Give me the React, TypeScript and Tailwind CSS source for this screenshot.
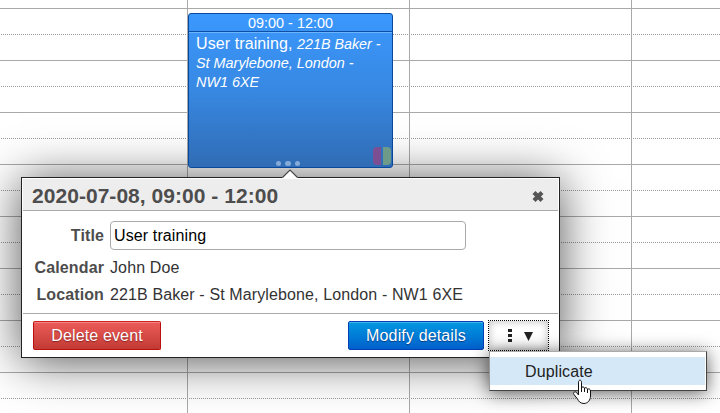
const SLOTS = Array.from({ length: 8 }, (_, i) => i);

function Grid() {
  return (
    <div className="flex h-[413px] w-[720px] bg-white">
      <Column className="w-[188px] border-r" />
      <Column className="w-[222px] border-r" />
      <Column className="w-[222px] border-r" />
      <Column className="w-[88px]" />
    </div>
  );
}

function Column({ className }: { className: string }) {
  return (
    <div className={`h-[413px] shrink-0 overflow-hidden border-[#a9a9a9] ${className}`}>
      <div className="h-[9px] border-b border-[#a9a9a9]" />
      {SLOTS.map((slot) => (
        <div key={slot} className="flex h-[52px] flex-col border-b border-[#a9a9a9]">
          <div className="h-[26px] shrink-0 border-b border-transparent bg-[repeating-linear-gradient(to_right,transparent_0_1px,#999_1px_2px)] bg-[length:100%_1px] bg-[position:0_25px] bg-no-repeat bg-origin-border" />
        </div>
      ))}
    </div>
  );
}

function EventCard() {
  return (
    <div className="absolute left-[188px] top-[13px] flex h-[155px] w-[205px] flex-col rounded-[3px] border border-[#07489b] bg-linear-to-b from-[#3b98fd] via-[#3788e2] to-[#306cb5] text-white">
      <div className="h-[18px] shrink-0 border-b border-[#0c4fa5] text-center text-[14.4px] leading-[18px]">
        <span>09:00 - 12:00</span>
      </div>
      <div className="border-t border-[#6db4ff] pl-[7px] text-[16px] leading-[19px]">
        <div className="mt-px whitespace-nowrap">
          <span className="tracking-[0.1px]">User training, </span>
          <i className="text-[14.3px]">221B Baker -</i>
        </div>
        <i className="block text-[14.4px]">St Marylebone, London -</i>
        <i className="block text-[14.4px]">NW1 6XE</i>
      </div>
      <div className="absolute bottom-[1px] left-[87px] flex gap-[4px]">
        <span className="size-[5.4px] rounded-full bg-[#83aad9]" />
        <span className="size-[5.4px] rounded-full bg-[#83aad9]" />
        <span className="size-[5.4px] rounded-full bg-[#83aad9]" />
      </div>
      <div className="absolute bottom-[2px] right-[1px] flex gap-[2px]">
        <span className="h-[18px] w-[8px] rounded-l-[4px] bg-[#7c4f92]" />
        <span className="h-[18px] w-[8px] rounded-r-[4px] bg-[#6d9a89]" />
      </div>
    </div>
  );
}

function Dialog() {
  return (
    <div className="absolute left-[21px] top-[177px] flex h-[181px] w-[539px] flex-col border border-[#222] bg-white shadow-[0_3px_45px_rgba(0,0,0,0.68)]">
      <svg className="absolute left-[260px] top-[-9px]" width="17" height="10" viewBox="0 0 17 10">
        <path d="M0 10 L0.5 8.5 L8 1 L15.5 8.5 L16 10 Z" fill="#fff" />
        <path d="M0.5 8.5 L8 1 L15.5 8.5" fill="none" stroke="#444" strokeWidth="1.1" />
      </svg>
      <header className="mx-px mt-px flex h-[32px] shrink-0 items-center justify-between border-b border-[#a9a9a9] bg-[#ededed] pl-[9px] pr-[13px]">
        <h1 className="relative top-px text-[21px] font-bold leading-6 tracking-[0.04px] text-[#4d4d4d]">2020-07-08, 09:00 - 12:00</h1>
        <svg className="relative top-[2px]" width="14" height="13" viewBox="0 0 14 13">
          <path d="M3 2.5 L11 10.5 M11 2.5 L3 10.5" stroke="#555" strokeWidth="4.2" />
        </svg>
      </header>
      <div className="h-[102px] shrink-0 pt-[10px] text-[16px] tracking-[0.12px] text-[#333]">
        <Row label="Title" className="h-[29px]">
          <div className="flex h-[29px] w-[356px] items-center rounded-[4px] border border-[#aaa] bg-white pl-[3px] text-black">
            User training
          </div>
        </Row>
        <Row label="Calendar" className="mt-[4px] h-[27px]">John Doe</Row>
        <Row label="Location" className="h-[27px]">221B Baker - St Marylebone, London - NW1 6XE</Row>
      </div>
      <footer className="mx-px flex h-[44px] items-start border-t border-[#a9a9a9] pl-[10px] pt-[7px] text-[16px] tracking-[0.14px] text-white">
        <button className="h-[29px] w-[128px] rounded-[2px] border border-[#b90f0f] border-t-[#c92323] bg-linear-to-b from-[#ed5c5a] to-[#c23a34] shadow-[inset_0_1px_0_#f38583] [text-shadow:0_1px_1px_#8a2020]">
          Delete event
        </button>
        <button className="ml-[187px] h-[29px] w-[136px] rounded-[2px] border border-[#0340b5] bg-linear-to-b from-[#0698e0] to-[#0060cc] shadow-[inset_0_1px_0_#42b6ec] [text-shadow:0_1px_1px_#043a80]">
          Modify details
        </button>
        <button className="-mt-px ml-[4px] flex h-[31px] w-[61px] items-center justify-center gap-[12px] border border-dotted border-black bg-white pl-[4px] shadow-[inset_0_0_9px_#bbb]">
          <svg width="4" height="13" viewBox="0 0 4 13" fill="#222">
            <path d="M0 0h4v3H0zM0 5h4v3H0zM0 10h4v3H0z" />
          </svg>
          <svg className="relative top-px" width="9" height="9" viewBox="0 0 9 9" fill="#222">
            <path d="M0 0h9L4.5 9z" />
          </svg>
        </button>
      </footer>
    </div>
  );
}

function Row({ label, className, children }: { label: string; className: string; children: React.ReactNode }) {
  return (
    <div className={`flex items-center ${className}`}>
      <div className="w-[82px] text-right font-bold text-[#4d4d4d]">{label}</div>
      <div className="ml-[6px] whitespace-nowrap">{children}</div>
    </div>
  );
}

function Menu() {
  return (
    <div className="absolute left-[489px] top-[351px] h-[40px] w-[218px] border border-[#444] border-l-[#999] border-t-[#aaa] bg-white py-[5px] pr-px shadow-[0_2px_18px_rgba(0,0,0,0.65)]">
      <div className="flex h-[28px] items-center bg-[#d5e8f8] pl-[35px] pt-px text-[16px] tracking-[0.12px] text-[#222]">Duplicate</div>
    </div>
  );
}

function HandCursor() {
  return (
    <svg className="absolute left-[572px] top-[379px]" width="21" height="26" viewBox="0 0 21 26">
      <path
        d="M6.5 16V3.2C6.5 .5 9.5 .5 9.5 3.2V9C9.8 7.3 12.5 7.5 12.5 9.5C13 8 15.5 8.5 15.5 10.5C16.5 9.3 18.5 10 18.5 12V17C18.5 21 16 24.3 12 24.5C8 24.5 6.5 22 5.5 20L2 15.5C.5 13.5 3 12 4.5 13.5Z"
        fill="#fff"
        stroke="#111"
        strokeLinejoin="round"
      />
      <path d="M9.5 8v5M12.5 9v4M15.5 10v4" stroke="#111" fill="none" />
    </svg>
  );
}

export default function App() {
  return (
    <main className="relative h-[413px] w-[720px] overflow-hidden bg-white font-['Liberation_Sans',Arial,sans-serif]">
      <Grid />
      <Dialog />
      <EventCard />
      <Menu />
      <HandCursor />
    </main>
  );
}
